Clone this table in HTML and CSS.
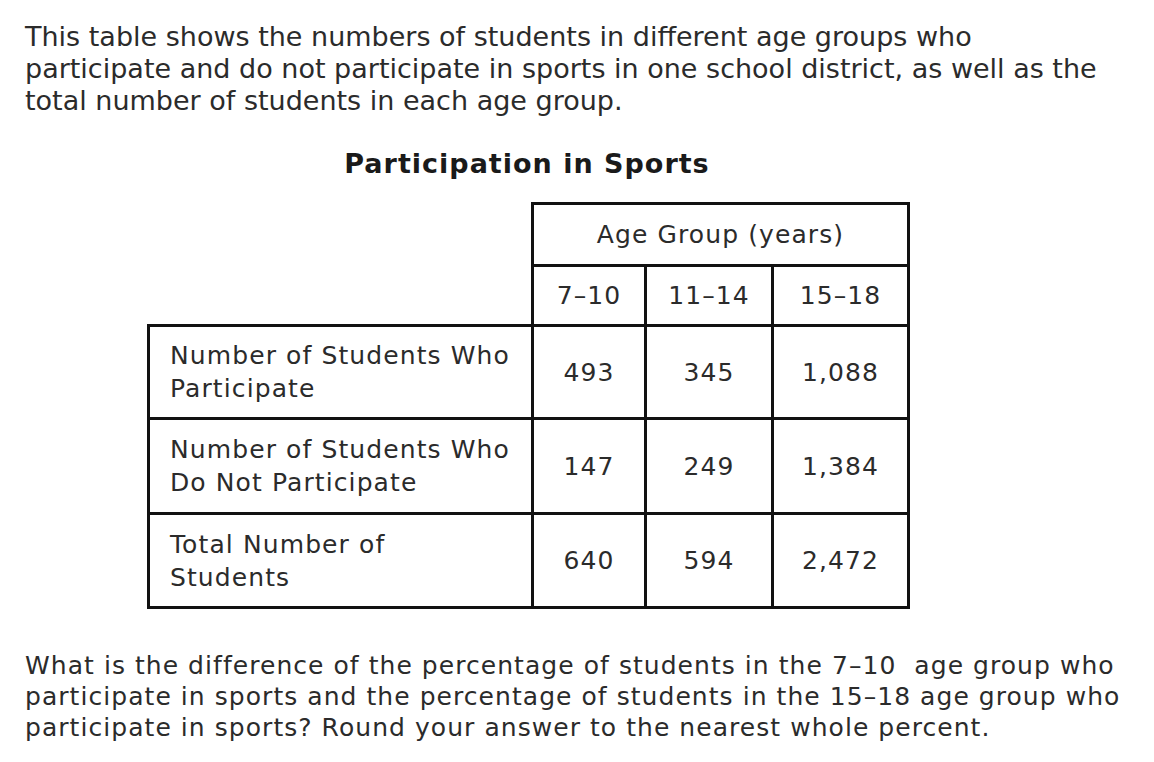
FILE: index.html
```html
<!DOCTYPE html>
<html>
<head>
<meta charset="utf-8">
<link rel="stylesheet" href="styles.css">
</head>
<body>
<div class="page">
  <p class="intro">This table shows the numbers of students in different age groups who<br>participate and do not participate in sports in one school district, as well as the<br>total number of students in each age group.</p>
  <div class="figure">
    <h2 class="title">Participation in Sports</h2>
    <table class="data">
      <colgroup>
        <col class="c-label">
        <col class="c1">
        <col class="c2">
        <col class="c3">
      </colgroup>
      <tr class="r-head1">
        <td class="blank" rowspan="2"></td>
        <th colspan="3">Age Group (years)</th>
      </tr>
      <tr class="r-head2">
        <th>7–10</th>
        <th>11–14</th>
        <th>15–18</th>
      </tr>
      <tr class="r-a">
        <td class="label">Number of Students Who<br>Participate</td>
        <td>493</td><td>345</td><td>1,088</td>
      </tr>
      <tr class="r-b">
        <td class="label">Number of Students Who<br>Do Not Participate</td>
        <td>147</td><td>249</td><td>1,384</td>
      </tr>
      <tr class="r-c">
        <td class="label">Total Number of<br>Students</td>
        <td>640</td><td>594</td><td>2,472</td>
      </tr>
    </table>
  </div>
  <p class="question">What is the difference of the percentage of students in the 7–10&nbsp; age group who<br>participate in sports and the percentage of students in the 15–18 age group who<br>participate in sports? Round your answer to the nearest whole percent.</p>
</div>
</body>
</html>
```
FILE: styles.css
```css
html, body {
  margin: 0;
  padding: 0;
  background: #ffffff;
}
body {
  font-family: "DejaVu Sans", Verdana, sans-serif;
  color: #2b2b2b;
}
.page {
  padding: 21px 25px 0 25px;
  width: 1104px;
}
.intro {
  margin: 0;
  font-size: 27px;
  line-height: 32px;
  white-space: nowrap;
}
.question {
  margin: 41px 0 0 0;
  font-size: 25px;
  letter-spacing: 1.05px;
  line-height: 31px;
  white-space: nowrap;
}
.figure {
  width: 760px;
  margin-left: 122px;
  margin-top: 31px;
}
.title {
  margin: 0 0 22px 0;
  font-size: 27px;
  letter-spacing: 1px;
  font-weight: bold;
  line-height: 32px;
  text-align: center;
  color: #1a1a1a;
}
.data {
  border-collapse: collapse;
  table-layout: fixed;
  width: 760px;
  font-size: 25px;
  letter-spacing: 1.1px;
}
.c-label { width: 384px; }
.c1 { width: 113px; }
.c2 { width: 127px; }
.c3 { width: 136px; }
.data th, .data td {
  border: 3px solid #111;
  text-align: center;
  font-weight: normal;
  padding: 0;
}
.data td.blank {
  border: none;
}
.data td.label {
  text-align: left;
  padding-left: 20px;
  line-height: 33px;
}
.r-head1 { height: 62px; }
.r-head2 { height: 60px; }
.r-a { height: 93px; }
.r-b { height: 95px; }
.r-c { height: 94px; }
```
